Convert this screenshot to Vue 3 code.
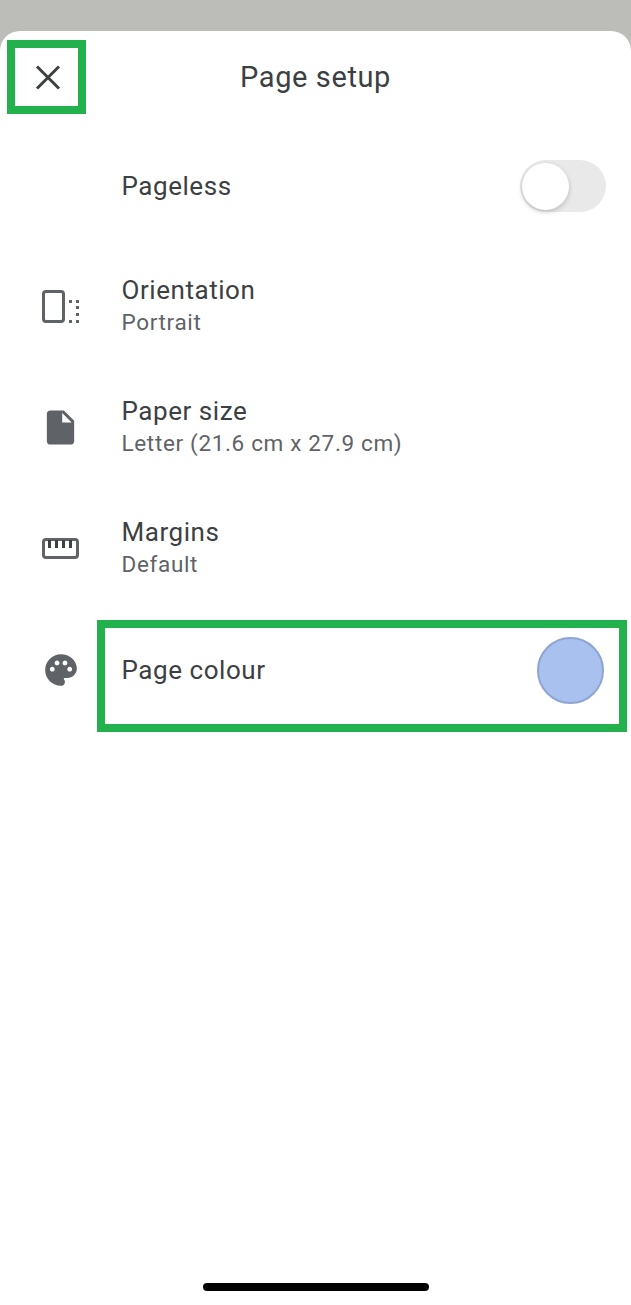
<script setup>
const closePath = "M8 7.5 L30 29.5 M30 7.5 L8 29.5";
</script>

<template>
  <div class="screen">
    <div class="sheet">
      <header class="header">
        <button class="close">
          <svg width="36" height="36" viewBox="0 0 36 36">
            <path :d="closePath" fill="none" stroke="#3c4043" stroke-width="3" />
          </svg>
        </button>
        <h1 class="title">Page setup</h1>
      </header>

      <div class="list">
        <div class="row row-toggle">
          <div class="icon"></div>
          <div class="text"><div class="label">Pageless</div></div>
          <div class="toggle"><span class="knob"></span></div>
        </div>

        <div class="row">
          <div class="icon">
            <svg width="44" height="44" viewBox="0 0 44 44">
              <rect x="4.5" y="7.5" width="20" height="30" rx="2.5" fill="none" stroke="#5f6368" stroke-width="3" />
              <g fill="#5f6368">
                <rect x="30" y="16" width="3" height="3" />
                <rect x="37" y="16" width="3" height="3" />
                <rect x="37" y="22" width="3" height="3" />
                <rect x="37" y="29" width="3" height="3" />
                <rect x="30" y="36" width="3" height="3" />
                <rect x="37" y="36" width="3" height="3" />
              </g>
            </svg>
          </div>
          <div class="text two-line">
            <div class="label">Orientation</div>
            <div class="sub">Portrait</div>
          </div>
        </div>

        <div class="row">
          <div class="icon">
            <svg class="file-icon" width="41" height="41" viewBox="0 0 24 24">
              <path fill="#5f6368" d="M6 2c-1.1 0-1.99.9-1.99 2L4 20c0 1.1.89 2 1.99 2H18c1.1 0 2-.9 2-2V8l-6-6H6zm7 7V3.5L18.5 9H13z" />
            </svg>
          </div>
          <div class="text two-line">
            <div class="label">Paper size</div>
            <div class="sub">Letter (21.6 cm x 27.9 cm)</div>
          </div>
        </div>

        <div class="row">
          <div class="icon">
            <svg width="44" height="44" viewBox="0 0 44 44">
              <rect x="4.5" y="13.5" width="34" height="18" rx="2.5" fill="none" stroke="#5f6368" stroke-width="3" />
              <g fill="#3c4043">
                <rect x="9" y="14" width="3" height="8" />
                <rect x="16" y="14" width="3" height="8" />
                <rect x="23" y="14" width="3" height="8" />
                <rect x="30" y="14" width="3" height="8" />
              </g>
            </svg>
          </div>
          <div class="text two-line">
            <div class="label">Margins</div>
            <div class="sub">Default</div>
          </div>
        </div>

        <div class="colour-row">
          <div class="icon colour-icon">
            <svg width="38" height="38" viewBox="0 0 24 24">
              <path fill="#5f6368" d="M12 2C6.49 2 2 6.49 2 12s4.49 10 10 10c1.38 0 2.5-1.12 2.5-2.5 0-.61-.23-1.2-.64-1.67-.08-.1-.13-.21-.13-.33 0-.28.22-.5.5-.5H16c3.31 0 6-2.69 6-6 0-4.96-4.49-9-10-9zm-5.5 11c-.83 0-1.5-.67-1.5-1.5S5.67 10 6.5 10s1.5.67 1.5 1.5S7.33 13 6.5 13zm3-4C8.67 9 8 8.33 8 7.5S8.67 6 9.5 6s1.5.67 1.5 1.5S10.33 9 9.5 9zm5 0c-.83 0-1.5-.67-1.5-1.5S13.67 6 14.5 6s1.5.67 1.5 1.5S15.33 9 14.5 9zm3 4c-.83 0-1.5-.67-1.5-1.5s.67-1.5 1.5-1.5 1.5.67 1.5 1.5-.67 1.5-1.5 1.5z" />
            </svg>
          </div>
          <div class="colour-box">
            <div class="label">Page colour</div>
            <span class="swatch"></span>
          </div>
        </div>
      </div>

      <div class="home-bar"></div>
    </div>
  </div>
</template>

<style scoped>
.screen {
  height: 1305px;
  background: #bcbdb9;
  padding-top: 31px;
  box-sizing: border-box;
  font-family: Roboto, "Liberation Sans", sans-serif;
  overflow: hidden;
}
.sheet {
  height: 100%;
  background: #fff;
  border-radius: 20px 20px 0 0;
  display: flex;
  flex-direction: column;
}
.header {
  position: relative;
  height: 83px;
  flex: none;
}
.close {
  position: absolute;
  left: 7px;
  top: 9px;
  width: 79px;
  height: 74px;
  box-sizing: border-box;
  border: 8px solid #23b14d;
  background: #fff;
  padding: 0;
  display: flex;
  align-items: center;
  justify-content: center;
}
.title {
  margin: 0;
  padding-top: 27px;
  text-align: center;
  font-size: 29px;
  font-weight: 400;
  letter-spacing: 0.6px;
  line-height: 38px;
  color: #3c4043;
}
.list {
  padding-top: 46px;
  display: flex;
  flex-direction: column;
  gap: 57px;
}
.row {
  display: flex;
  align-items: center;
  height: 64px;
  padding-right: 25px;
}
.row-toggle {
  height: 52px;
  margin-bottom: 5px;
}
.icon {
  width: 122px;
  flex: none;
  display: flex;
  justify-content: center;
}
.icon svg {
  display: block;
}
.file-icon {
  margin-right: 2px;
}
.text {
  flex: 1;
}
.two-line {
  margin-top: -2px;
}
.label {
  font-size: 26px;
  line-height: 34px;
  letter-spacing: 0.55px;
  margin-left: -0.5px;
  color: #3c4043;
}
.sub {
  font-size: 22.5px;
  line-height: 30px;
  letter-spacing: 0.66px;
  margin-left: -0.5px;
  color: #5f6368;
}
.toggle {
  width: 86px;
  height: 52px;
  border-radius: 26px;
  background: #e9e9e9;
  display: flex;
  align-items: center;
  padding-left: 2px;
  box-sizing: border-box;
}
.knob {
  width: 47px;
  height: 47px;
  border-radius: 50%;
  background: #fff;
  box-shadow: 0 2px 5px rgba(0, 0, 0, 0.2);
}
.colour-row {
  display: flex;
  align-items: flex-start;
  margin-top: -17px;
}
.colour-icon {
  width: 97px;
  padding: 31px 0 0 25px;
  box-sizing: border-box;
}
.colour-box {
  width: 530px;
  height: 112px;
  box-sizing: border-box;
  border: 8px solid #23b14d;
  padding: 9px 15px 21px 17px;
  display: flex;
  align-items: center;
  justify-content: space-between;
}
.swatch {
  width: 67px;
  height: 67px;
  box-sizing: border-box;
  border-radius: 50%;
  background: #a9c1ef;
  border: 2px solid #8ea4d3;
}
.home-bar {
  width: 226px;
  height: 8px;
  border-radius: 4px;
  background: #000;
  margin: auto 0 14px 203px;
}
</style>
